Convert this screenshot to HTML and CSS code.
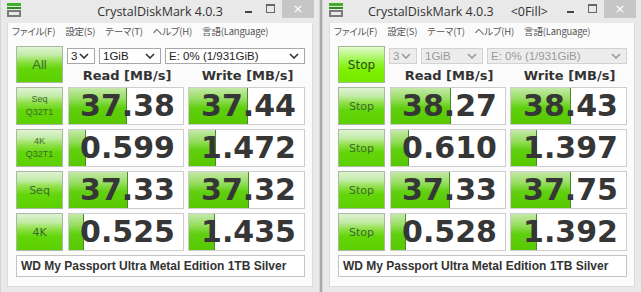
FILE: index.html
```html
<!DOCTYPE html>
<html lang="ja">
<head>
<meta charset="utf-8">
<title>CrystalDiskMark</title>
<link rel="stylesheet" href="styles.css">
</head>
<body>
<div class="desk">
  <div class="win">
    <div class="titlebar">
      <div class="iconwrap">
        <svg class="appicon" width="14" height="14" viewBox="0 0 14 14"><rect x="0" y="0" width="14" height="3" fill="#3fae2a"/><rect x="0" y="4" width="14" height="2" fill="#2d8a1f"/><rect x="0" y="7" width="14" height="7" fill="#7a7a7a"/><rect x="2" y="9" width="10" height="3" fill="#e8e8e8"/></svg>
      </div>
      <div class="title">CrystalDiskMark 4.0.3</div>
      <div class="caps"><span class="min"></span><span class="max"></span><span class="close">×</span></div>
    </div>
    <div class="client">
      <div class="menu"><span>ファイル(F)</span><span>設定(S)</span><span>テーマ(T)</span><span>ヘルプ(H)</span><span>言語(Language)</span></div>
      <div class="panel">
        <div class="top">
          <div class="btn big">All</div>
          <div class="topright">
            <div class="combos">
              <div class="combo c1"><span>3</span><svg width="10" height="6" viewBox="0 0 10 6"><polyline points="1,1 5,5 9,1" fill="none" stroke="#333" stroke-width="1.6"/></svg></div>
              <div class="combo c2"><span>1GiB</span><svg width="10" height="6" viewBox="0 0 10 6"><polyline points="1,1 5,5 9,1" fill="none" stroke="#333" stroke-width="1.6"/></svg></div>
              <div class="combo c3"><span>E: 0% (1/931GiB)</span><svg width="10" height="6" viewBox="0 0 10 6"><polyline points="1,1 5,5 9,1" fill="none" stroke="#333" stroke-width="1.6"/></svg></div>
            </div>
            <div class="heads"><div class="head h1">Read [MB/s]</div><div class="head h2">Write [MB/s]</div></div>
          </div>
        </div>
        <div class="row">
          <div class="btn two">Seq<br>Q32T1</div>
          <div class="cell c-read" style="--w:58px">37.38</div>
          <div class="cell c-write" style="--w:59px">37.44</div>
        </div>
        <div class="row">
          <div class="btn two">4K<br>Q32T1</div>
          <div class="cell c-read" style="--w:17px">0.599</div>
          <div class="cell c-write" style="--w:27px">1.472</div>
        </div>
        <div class="row">
          <div class="btn one">Seq</div>
          <div class="cell c-read" style="--w:59px">37.33</div>
          <div class="cell c-write" style="--w:60px">37.32</div>
        </div>
        <div class="row">
          <div class="btn one">4K</div>
          <div class="cell c-read" style="--w:15px">0.525</div>
          <div class="cell c-write" style="--w:26px">1.435</div>
        </div>
        <div class="comment">WD My Passport Ultra Metal Edition 1TB Silver</div>
      </div>
    </div>
  </div>

  <div class="win">
    <div class="titlebar wide">
      <div class="iconwrap">
        <svg class="appicon" width="14" height="14" viewBox="0 0 14 14"><rect x="0" y="0" width="14" height="3" fill="#3fae2a"/><rect x="0" y="4" width="14" height="2" fill="#2d8a1f"/><rect x="0" y="7" width="14" height="7" fill="#7a7a7a"/><rect x="2" y="9" width="10" height="3" fill="#e8e8e8"/></svg>
      </div>
      <div class="title">CrystalDiskMark 4.0.3<span class="fill">&lt;0Fill&gt;</span></div>
      <div class="caps"><span class="min"></span><span class="max"></span><span class="close">×</span></div>
    </div>
    <div class="client">
      <div class="menu"><span>ファイル(F)</span><span>設定(S)</span><span>テーマ(T)</span><span>ヘルプ(H)</span><span>言語(Language)</span></div>
      <div class="panel">
        <div class="top">
          <div class="btn big active">Stop</div>
          <div class="topright">
            <div class="combos disabled">
              <div class="combo c1"><span>3</span><svg width="10" height="6" viewBox="0 0 10 6"><polyline points="1,1 5,5 9,1" fill="none" stroke="#9a9a9a" stroke-width="1.6"/></svg></div>
              <div class="combo c2"><span>1GiB</span><svg width="10" height="6" viewBox="0 0 10 6"><polyline points="1,1 5,5 9,1" fill="none" stroke="#9a9a9a" stroke-width="1.6"/></svg></div>
              <div class="combo c3"><span>E: 0% (1/931GiB)</span><svg width="10" height="6" viewBox="0 0 10 6"><polyline points="1,1 5,5 9,1" fill="none" stroke="#9a9a9a" stroke-width="1.6"/></svg></div>
            </div>
            <div class="heads"><div class="head h1">Read [MB/s]</div><div class="head h2">Write [MB/s]</div></div>
          </div>
        </div>
        <div class="row">
          <div class="btn one stop">Stop</div>
          <div class="cell c-read" style="--w:60px">38.27</div>
          <div class="cell c-write" style="--w:60px">38.43</div>
        </div>
        <div class="row">
          <div class="btn one stop">Stop</div>
          <div class="cell c-read" style="--w:18px">0.610</div>
          <div class="cell c-write" style="--w:26px">1.397</div>
        </div>
        <div class="row">
          <div class="btn one stop">Stop</div>
          <div class="cell c-read" style="--w:59px">37.33</div>
          <div class="cell c-write" style="--w:60px">37.75</div>
        </div>
        <div class="row">
          <div class="btn one stop">Stop</div>
          <div class="cell c-read" style="--w:15px">0.528</div>
          <div class="cell c-write" style="--w:26px">1.392</div>
        </div>
        <div class="comment">WD My Passport Ultra Metal Edition 1TB Silver</div>
      </div>
    </div>
  </div>
</div>
</body>
</html>
```
FILE: styles.css
```css
html, body {
  margin: 0;
  padding: 0;
  background: #a9a9a9;
}

.desk {
  display: flex;
  gap: 2px;
  width: 642px;
  height: 292px;
  background: #a9a9a9;
}

.win {
  width: 320px;
  height: 292px;
  background: #e9e9e9;
  display: flex;
  flex-direction: column;
  box-sizing: border-box;
  border-left: 1px solid #d4d4d4;
  border-right: 1px solid #d4d4d4;
}

.titlebar {
  height: 23px;
  display: grid;
  grid-template-columns: 80px 1fr 80px;
  align-items: start;
  flex: none;
}

.titlebar.wide {
  grid-template-columns: 35px 1fr 83px;
}

.iconwrap {
  padding: 3px 0 0 6px;
}

.appicon {
  display: block;
}

.title {
  font-family: "Open Sans", "Liberation Sans", sans-serif;
  font-size: 12.5px;
  line-height: 16px;
  color: #333;
  padding-top: 4px;
  white-space: nowrap;
  text-align: center;
}

.fill {
  margin-left: 17px;
}

.caps {
  display: flex;
  justify-content: flex-end;
  align-items: flex-start;
  padding-right: 5px;
}

.min {
  width: 7px;
  height: 2px;
  background: #444;
  margin-top: 11px;
}

.max {
  width: 7px;
  height: 6px;
  border: 1px solid #666;
  border-top-width: 2px;
  margin: 4px 0 0 14px;
}

.close {
  width: 32px;
  height: 18px;
  background: #c6c6c6;
  color: #fff;
  font-family: "DejaVu Sans", sans-serif;
  font-size: 13px;
  line-height: 17px;
  text-align: center;
  margin-left: 7px;
}

.client {
  flex: none;
  height: 264px;
  margin: 0 6px 0 6px;
  background: #fbfbfb;
  border: 1px solid #dcdcdc;
  border-top: none;
  box-sizing: border-box;
}

.menu {
  height: 17px;
  display: flex;
  gap: 10px;
  padding-left: 4px;
  font-family: "Noto Sans CJK JP", "Noto Sans", sans-serif;
  font-feature-settings: "palt";
  font-size: 9.5px;
  letter-spacing: -0.2px;
  line-height: 17px;
  color: #555;
  white-space: nowrap;
}

.panel {
  padding: 6px 0 0 8px;
}

.top {
  display: flex;
  height: 41px;
}

.topright {
  margin-left: 4px;
}

.combos {
  display: flex;
  gap: 4px;
  margin-top: 2px;
  height: 16px;
}

.combo {
  box-sizing: border-box;
  height: 16px;
  border: 1px solid #a8a8a8;
  background: #fff;
  display: flex;
  align-items: center;
  justify-content: space-between;
  padding: 0 5px 0 3px;
  font-family: "Liberation Sans", sans-serif;
  font-size: 11.5px;
  color: #222;
}

.combos.disabled .combo {
  background: #ececec;
  border-color: #d2d2d2;
  color: #9a9a9a;
}

.c1 { width: 28px; }
.c2 { width: 62px; }
.c3 { width: 140px; }

.heads {
  display: flex;
  height: 23px;
}

.head {
  font-family: "DejaVu Sans", sans-serif;
  font-weight: bold;
  font-size: 13px;
  color: #333;
  text-align: center;
  line-height: 23px;
}

.h1 { width: 118px; margin-left: 1px; }
.h2 { width: 117px; margin-left: 3px; }

.btn {
  box-sizing: border-box;
  width: 47px;
  border: 1px solid #a9b8a0;
  background: linear-gradient(#dff2d2 0%, #c4ecaa 22%, #8fe046 42%, #62d60a 62%, #5cd000 100%);
  display: flex;
  align-items: center;
  justify-content: center;
  text-align: center;
  color: #3c6a2c;
}

.btn.big {
  height: 37px;
  font-family: "Liberation Sans", sans-serif;
  font-size: 13px;
}

.btn.active {
  background: linear-gradient(#e4fbd0 0%, #bff88a 20%, #96f640 42%, #7ef000 65%, #74ea00 100%);
  border-color: #9fb890;
  color: #2a4a12;
  font-family: "DejaVu Sans", sans-serif;
  font-size: 12px;
}

.row {
  display: flex;
  height: 38px;
  margin-bottom: 4px;
}

.row .btn {
  height: 38px;
  margin-right: 5px;
}

.btn.two {
  font-family: "Liberation Sans", sans-serif;
  font-size: 9px;
  line-height: 13px;
}

.btn.one {
  font-family: "DejaVu Sans", sans-serif;
  font-size: 11px;
}

.cell {
  --bar: linear-gradient(#c4e9a8 0%, #98de62 30%, #60cf10 55%, #58c800 100%);
  box-sizing: border-box;
  height: 38px;
  border: 1px solid #cdcdcd;
  background-color: #fff;
  background-image: linear-gradient(#4a8a2a, #4a8a2a), var(--bar);
  background-repeat: no-repeat;
  background-size: 1px 100%, var(--w) 100%;
  background-position: calc(var(--w) - 1px) 0, 0 0;
  font-family: "DejaVu Sans", sans-serif;
  font-weight: bold;
  font-size: 30px;
  line-height: 36px;
  color: #363636;
  text-align: right;
  padding-right: 8px;
}

.c-read { width: 116px; margin-right: 4px; }
.c-write { width: 117px; }

.comment {
  box-sizing: border-box;
  width: 289px;
  height: 22px;
  margin-top: 2px;
  border: 1px solid #c4c4c4;
  background: #fff;
  font-family: "Liberation Sans", sans-serif;
  font-weight: bold;
  font-size: 12px;
  line-height: 20px;
  color: #333;
  padding-left: 4px;
}
```
